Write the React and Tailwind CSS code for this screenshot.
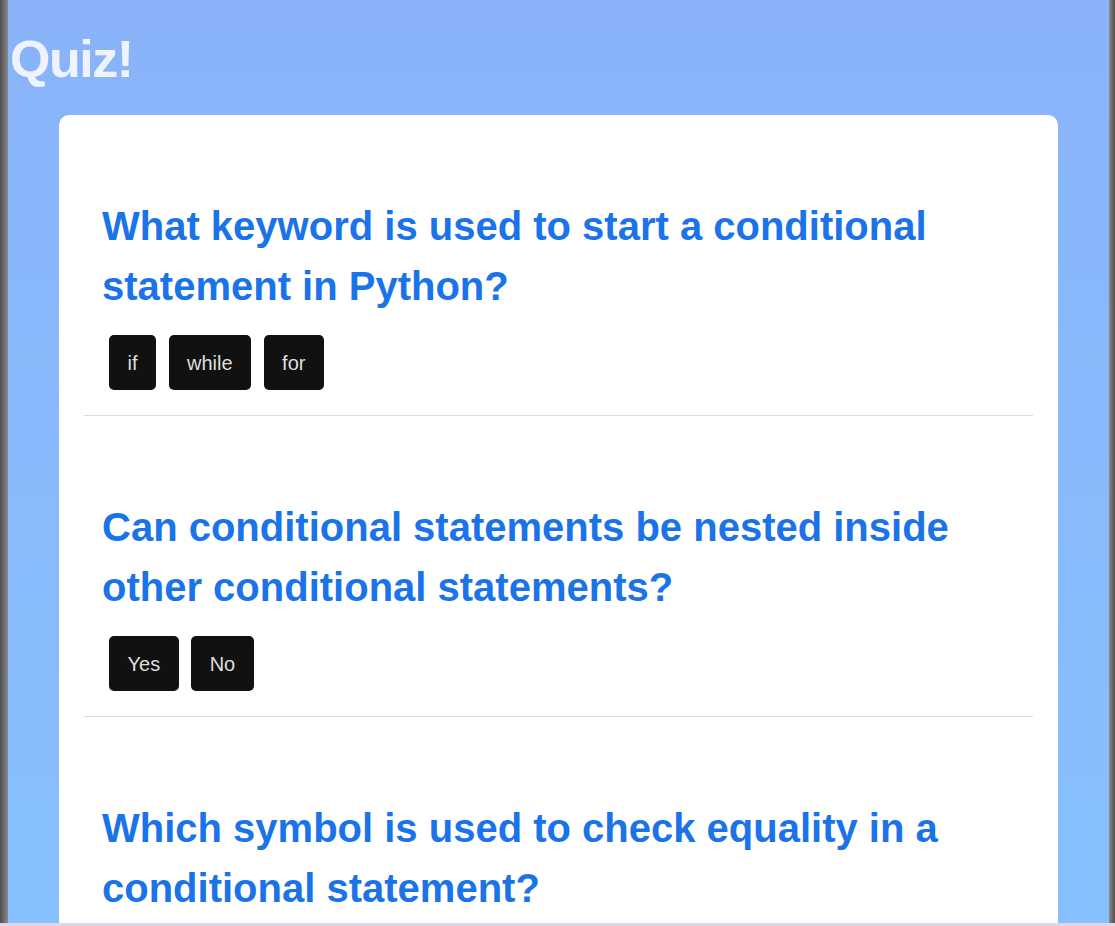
import React from 'react';

const questions = [
  {
    text: 'What keyword is used to start a conditional statement in Python?',
    options: ['if', 'while', 'for'],
  },
  {
    text: 'Can conditional statements be nested inside other conditional statements?',
    options: ['Yes', 'No'],
  },
  {
    text: 'Which symbol is used to check equality in a conditional statement?',
    options: [],
  },
];

const Question = ({ question }) => (
  <div className="pt-[81px] pb-[25px] border-b border-[#dddddd]">
    <h2 className="pl-[18px] pr-[40px] text-[40px] leading-[60px] font-bold text-[#1a73e8]">
      {question.text}
    </h2>
    <div className="mt-[19px] ml-[25px] flex gap-[12.5px]">
      {question.options.map((option) => (
        <button
          key={option}
          className="h-[55px] px-[18.5px] rounded-[5px] bg-[#111111] text-[20px] text-[#dedede]"
        >
          {option}
        </button>
      ))}
    </div>
  </div>
);

const App = () => {
  return (
    <div className="h-[926px] flex flex-col overflow-hidden font-['Liberation_Sans',Arial,sans-serif]">
      <div className="flex flex-1 min-h-0">
        <div className="w-[8px] bg-gradient-to-r from-[#505050] to-[#8a8a8a]" />
        <main className="flex-1 min-w-0 overflow-hidden bg-gradient-to-b from-[#8ab3f9] to-[#87c0ff]">
          <h1 className="pt-[33px] pl-[2px] text-[52px] leading-[52px] font-bold tracking-[-1.5px] text-[#eef4ff]">
            Quiz!
          </h1>
          <div className="mt-[30px] mx-[51px] bg-white rounded-[10px] px-[25px]">
            {questions.map((question) => (
              <Question key={question.text} question={question} />
            ))}
          </div>
        </main>
        <div className="w-[6px] bg-gradient-to-r from-[#8a8a8a] to-[#505050]" />
      </div>
      <div className="h-[3px] bg-[#dcd8e8]" />
    </div>
  );
};

export default App;
